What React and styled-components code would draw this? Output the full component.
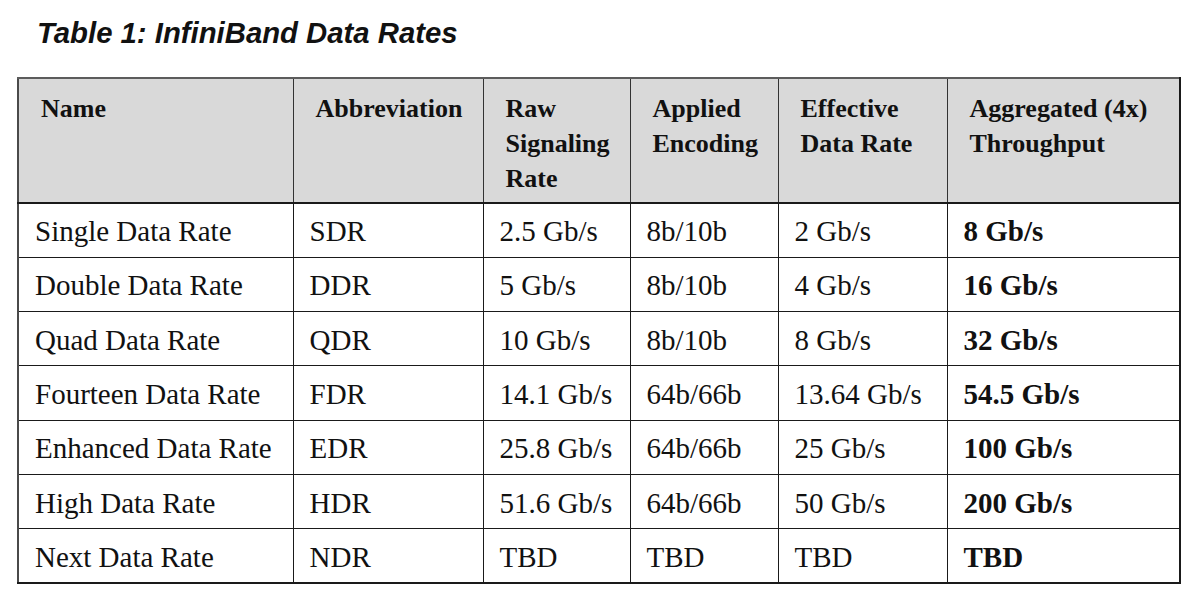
import React from "react";
import styled, { createGlobalStyle } from "styled-components";

const GlobalStyle = createGlobalStyle`
  body {
    margin: 0;
    background: #ffffff;
  }
`;

const columns = [
  { title: "Name", width: 275 },
  { title: "Abbreviation", width: 190 },
  { title: "Raw Signaling Rate", width: 147 },
  { title: "Applied Encoding", width: 148 },
  { title: "Effective Data Rate", width: 169 },
  { title: "Aggregated (4x) Throughput", width: 233 },
];

const rows = [
  ["Single Data Rate", "SDR", "2.5 Gb/s", "8b/10b", "2 Gb/s", "8 Gb/s"],
  ["Double Data Rate", "DDR", "5 Gb/s", "8b/10b", "4 Gb/s", "16 Gb/s"],
  ["Quad Data Rate", "QDR", "10 Gb/s", "8b/10b", "8 Gb/s", "32 Gb/s"],
  ["Fourteen Data Rate", "FDR", "14.1 Gb/s", "64b/66b", "13.64 Gb/s", "54.5 Gb/s"],
  ["Enhanced Data Rate", "EDR", "25.8 Gb/s", "64b/66b", "25 Gb/s", "100 Gb/s"],
  ["High Data Rate", "HDR", "51.6 Gb/s", "64b/66b", "50 Gb/s", "200 Gb/s"],
  ["Next Data Rate", "NDR", "TBD", "TBD", "TBD", "TBD"],
];

const App = () => {
  return (
    <Page>
      <GlobalStyle />
      <Title>Table 1: InfiniBand Data Rates</Title>
      <RateTable>
        <colgroup>
          {columns.map((col) => (
            <col key={col.title} style={{ width: col.width }} />
          ))}
        </colgroup>
        <thead>
          <HeadRow>
            {columns.map((col) => (
              <HeadCell key={col.title}>{col.title}</HeadCell>
            ))}
          </HeadRow>
        </thead>
        <tbody>
          {rows.map((row) => (
            <BodyRow key={row[1]}>
              {row.map((value, idx) => (
                <Cell key={idx} bold={idx === row.length - 1}>
                  {value}
                </Cell>
              ))}
            </BodyRow>
          ))}
        </tbody>
      </RateTable>
    </Page>
  );
};

const Page = styled.div`
  padding: 16px 0 0 17px;
`;

const Title = styled.h1`
  margin: 0 0 27px 0;
  padding-left: 20px;
  font-family: "Liberation Sans", Arial, sans-serif;
  font-style: italic;
  font-weight: bold;
  font-size: 29.3px;
  line-height: 34px;
  color: #111;
`;

const RateTable = styled.table`
  border-collapse: collapse;
  table-layout: fixed;
  width: 1162px;
  border: 2px solid #1a1a1a;
  border-top-color: #5c5c5c;
  border-left-color: #4a4a4a;
  font-family: "Liberation Serif", "Times New Roman", serif;
  color: #111;
`;

const HeadRow = styled.tr`
  height: 125px;
  background: #d9d9d9;
`;

const HeadCell = styled.th`
  vertical-align: top;
  text-align: left;
  padding: 12px 6px 6px 22px;
  font-size: 26px;
  line-height: 35px;
  font-weight: bold;
  border: 1.5px solid #333;
  border-bottom: 2px solid #1a1a1a;
`;

const BodyRow = styled.tr`
  height: 54.3px;
`;

const Cell = styled.td`
  vertical-align: middle;
  padding: 2px 2px 0 16px;
  font-size: 29px;
  line-height: 32px;
  font-weight: ${({ bold }) => (bold ? "bold" : "normal")};
  white-space: nowrap;
  border: 1.5px solid #1a1a1a;
`;

export default App;
